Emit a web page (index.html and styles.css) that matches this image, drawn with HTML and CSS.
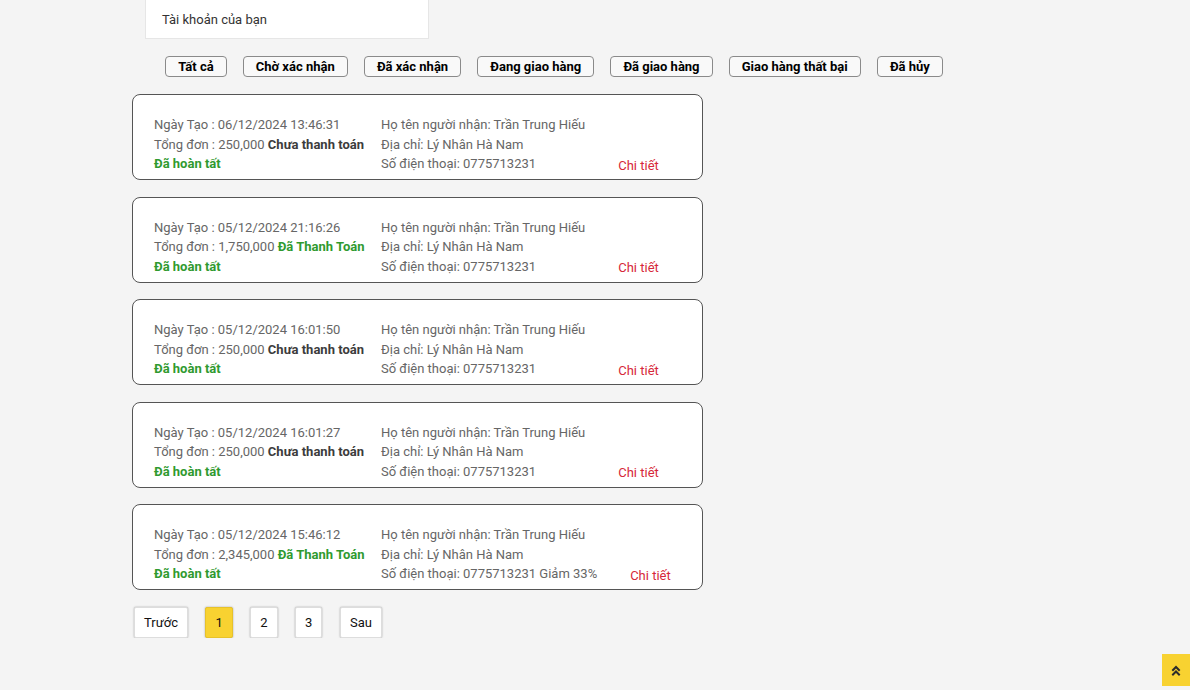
FILE: index.html
```html
<!DOCTYPE html>
<html lang="vi">
<head>
<meta charset="utf-8">
<title>Đơn hàng</title>
<link rel="stylesheet" href="styles.css">
</head>
<body>
<div class="page">
  <div class="account-box">Tài khoản của bạn</div>

  <div class="filters">
    <button class="filter">Tất cả</button>
    <button class="filter">Chờ xác nhận</button>
    <button class="filter">Đã xác nhận</button>
    <button class="filter">Đang giao hàng</button>
    <button class="filter">Đã giao hàng</button>
    <button class="filter">Giao hàng thất bại</button>
    <button class="filter">Đã hủy</button>
  </div>

  <div class="orders">
    <div class="order">
      <div class="col col-left">
        <div>Ngày Tạo : 06/12/2024 13:46:31</div>
        <div>Tổng đơn : 250,000 <b class="unpaid">Chưa thanh toán</b></div>
        <div class="done">Đã hoàn tất</div>
      </div>
      <div class="col col-mid">
        <div>Họ tên người nhận: Trần Trung Hiếu</div>
        <div>Địa chỉ: Lý Nhân Hà Nam</div>
        <div>Số điện thoại: 0775713231</div>
      </div>
      <a class="detail">Chi tiết</a>
    </div>

    <div class="order">
      <div class="col col-left">
        <div>Ngày Tạo : 05/12/2024 21:16:26</div>
        <div>Tổng đơn : 1,750,000 <b class="paid">Đã Thanh Toán</b></div>
        <div class="done">Đã hoàn tất</div>
      </div>
      <div class="col col-mid">
        <div>Họ tên người nhận: Trần Trung Hiếu</div>
        <div>Địa chỉ: Lý Nhân Hà Nam</div>
        <div>Số điện thoại: 0775713231</div>
      </div>
      <a class="detail">Chi tiết</a>
    </div>

    <div class="order">
      <div class="col col-left">
        <div>Ngày Tạo : 05/12/2024 16:01:50</div>
        <div>Tổng đơn : 250,000 <b class="unpaid">Chưa thanh toán</b></div>
        <div class="done">Đã hoàn tất</div>
      </div>
      <div class="col col-mid">
        <div>Họ tên người nhận: Trần Trung Hiếu</div>
        <div>Địa chỉ: Lý Nhân Hà Nam</div>
        <div>Số điện thoại: 0775713231</div>
      </div>
      <a class="detail">Chi tiết</a>
    </div>

    <div class="order">
      <div class="col col-left">
        <div>Ngày Tạo : 05/12/2024 16:01:27</div>
        <div>Tổng đơn : 250,000 <b class="unpaid">Chưa thanh toán</b></div>
        <div class="done">Đã hoàn tất</div>
      </div>
      <div class="col col-mid">
        <div>Họ tên người nhận: Trần Trung Hiếu</div>
        <div>Địa chỉ: Lý Nhân Hà Nam</div>
        <div>Số điện thoại: 0775713231</div>
      </div>
      <a class="detail">Chi tiết</a>
    </div>

    <div class="order">
      <div class="col col-left">
        <div>Ngày Tạo : 05/12/2024 15:46:12</div>
        <div>Tổng đơn : 2,345,000 <b class="paid">Đã Thanh Toán</b></div>
        <div class="done">Đã hoàn tất</div>
      </div>
      <div class="col col-mid">
        <div>Họ tên người nhận: Trần Trung Hiếu</div>
        <div>Địa chỉ: Lý Nhân Hà Nam</div>
        <div>Số điện thoại: 0775713231 Giảm 33%</div>
      </div>
      <a class="detail">Chi tiết</a>
    </div>
  </div>

  <div class="pager">
    <button class="page-btn">Trước</button>
    <button class="page-btn active">1</button>
    <button class="page-btn">2</button>
    <button class="page-btn">3</button>
    <button class="page-btn">Sau</button>
  </div>
</div>

<button class="to-top" aria-label="Lên đầu trang">
  <svg width="10" height="11" viewBox="0 0 10 11" fill="none" stroke="#2b2b2b" stroke-width="2" stroke-linecap="square">
    <polyline points="2,5 5,2 8,5"/>
    <polyline points="2,9.5 5,6.5 8,9.5"/>
  </svg>
</button>
</body>
</html>
```

FILE: styles.css
```css
* { box-sizing: border-box; }

html, body {
  margin: 0;
  padding: 0;
  background: #f4f4f4;
  font-family: Roboto, "Liberation Sans", Arial, sans-serif;
  font-size: 13px;
  color: #666;
}

.page {
  padding-left: 132px;
  width: 1000px;
}

.account-box {
  margin-left: 13px;
  width: 284px;
  height: 39px;
  background: #fff;
  border: 1px solid #e6e6e6;
  border-top: none;
  padding: 0 16px;
  display: flex;
  align-items: center;
  color: #333;
  font-size: 13px;
}

.filters {
  display: flex;
  gap: 15.8px;
  margin-top: 17px;
  margin-left: 33px;
}

.filter {
  height: 21px;
  padding: 0 12.2px;
  background: #f9f9f9;
  border: 1px solid #8a8a8a;
  border-radius: 4px;
  font-family: Roboto, "Liberation Sans", Arial, sans-serif;
  font-weight: 700;
  font-size: 13px;
  color: #000;
  line-height: 19px;
}

.orders {
  margin-top: 17px;
  display: flex;
  flex-direction: column;
  gap: 16.6px;
}

.order {
  width: 571px;
  height: 86px;
  background: #fff;
  border: 1px solid #555;
  border-radius: 8px;
  padding: 20px 20px 6px 21px;
  display: flex;
  line-height: 19.5px;
}

.col-left {
  width: 227px;
  flex-shrink: 0;
  white-space: nowrap;
}

.col-mid {
  white-space: nowrap;
}

.unpaid { color: #3c3c3c; font-weight: 700; }
.paid { color: #2f9a2f; font-weight: 700; }
.done { color: #2f9a2f; font-weight: 700; }

.detail {
  align-self: flex-end;
  flex-shrink: 0;
  white-space: nowrap;
  margin-left: 33px;
  margin-bottom: -2px;
  color: #d6283a;
  cursor: pointer;
}

.pager {
  display: flex;
  gap: 17.5px;
  margin-top: 17px;
  margin-left: 2px;
}

.page-btn {
  height: 31px;
  min-width: 27px;
  padding: 0 9px;
  background: #fff;
  border: 1px solid #ddd;
  border-radius: 2px;
  box-shadow: 0 0 2px rgba(0,0,0,0.35);
  font-family: Roboto, "Liberation Sans", Arial, sans-serif;
  font-size: 13px;
  color: #111;
}

.page-btn.active {
  background: #f8d231;
  border-color: #e7c22a;
}

.to-top {
  position: fixed;
  right: 0;
  bottom: 4px;
  width: 28px;
  height: 32px;
  background: #f8d231;
  border: none;
  padding: 0;
  display: flex;
  align-items: center;
  justify-content: center;
}
```
